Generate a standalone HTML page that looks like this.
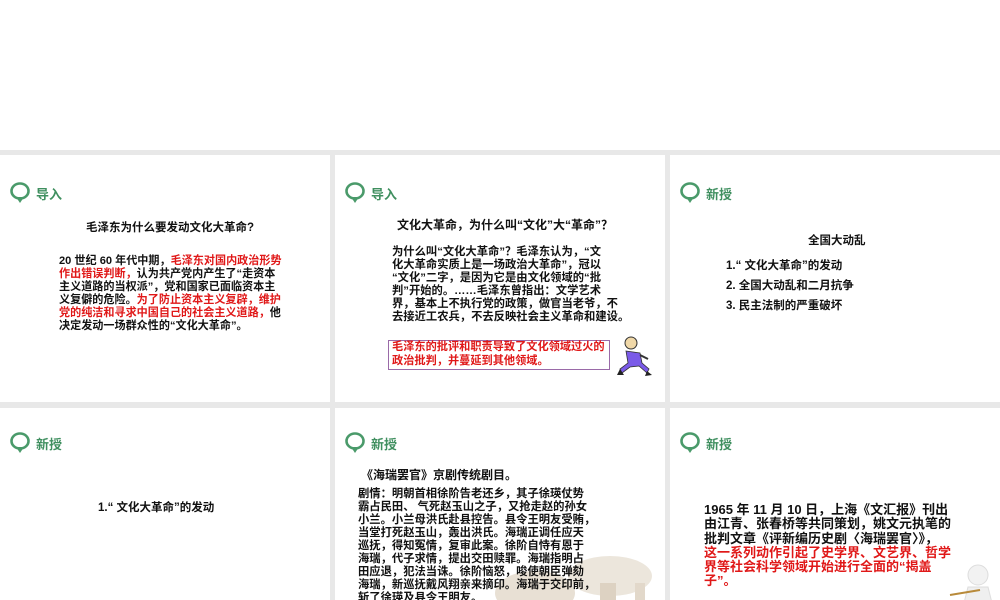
<!DOCTYPE html>
<html><head><meta charset="utf-8"><style>
*{margin:0;padding:0;box-sizing:border-box}
body{width:1000px;height:600px;overflow:hidden;background:#fff;font-family:"Liberation Sans","Noto Sans CJK SC",sans-serif;position:relative}
.bg{position:absolute;left:0;top:150px;width:1000px;height:450px;background:#e8e8e8}
.s{position:absolute;background:#fff;overflow:hidden}
.hd{position:absolute;left:9px;top:27px;display:flex;align-items:center;color:#3f8f5f;font-weight:bold;font-size:13px}
.pin{width:22px;height:22px;margin-right:5px;position:relative}
.t{position:absolute;font-weight:bold;font-size:12px;color:#111;line-height:14.5px;white-space:nowrap}
.r{color:#e01818}
</style></head><body>
<div class="bg"></div>

<svg width="0" height="0" style="position:absolute"><defs><g id="p"><ellipse cx="11" cy="9" rx="8.5" ry="7.5" fill="none" stroke="#4a9a6a" stroke-width="2.6"/><path d="M7 15 L11 21 L15 15Z" fill="#4a9a6a"/></g></defs></svg>

<div class="s" style="left:0;top:155px;width:330px;height:247px">
 <div class="hd"><svg class="pin" viewBox="0 0 22 22"><use href="#p"/></svg>导入</div>
 <div class="t" style="left:86px;top:66px;font-size:11.5px">毛泽东为什么要发动文化大革命?</div>
 <div class="t" style="left:59px;top:100px;font-size:11.1px;line-height:13px">20 世纪 60 年代中期，<span class="r">毛泽东对国内政治形势</span><br><span class="r">作出错误判断，</span>认为共产党内产生了“走资本<br>主义道路的当权派”，党和国家已面临资本主<br>义复僻的危险。<span class="r">为了防止资本主义复辟，维护</span><br><span class="r">党的纯洁和寻求中国自己的社会主义道路，</span>他<br>决定发动一场群众性的“文化大革命”。</div>
</div>

<div class="s" style="left:335px;top:155px;width:330px;height:247px">
 <div class="hd"><svg class="pin" viewBox="0 0 22 22"><use href="#p"/></svg>导入</div>
 <div class="t" style="left:62px;top:63px">文化大革命，为什么叫“文化”大“革命”？</div>
 <div class="t" style="left:57px;top:91px;font-size:11.3px;line-height:13px">为什么叫“文化大革命”？毛泽东认为，“文<br>化大革命实质上是一场政治大革命”，冠以<br>“文化”二字，是因为它是由文化领域的“批<br>判”开始的。……毛泽东曾指出：文学艺术<br>界，基本上不执行党的政策，做官当老爷，不<br>去接近工农兵，不去反映社会主义革命和建设。</div>
 <div class="t r" style="left:53px;top:185px;width:222px;height:30px;border:1px solid #9a6aa8;padding:0 3px;line-height:13.5px;font-size:11.2px">毛泽东的批评和职责导致了文化领域过火的<br>政治批判，并蔓延到其他领域。</div>
 <svg style="position:absolute;left:280px;top:180px" width="40" height="42" viewBox="0 0 40 42">
  <circle cx="16" cy="8" r="6" fill="#f0d8a8" stroke="#333"/>
  <path d="M11 16 L25 18 L27 28 L34 34 L32 38 L24 31 L15 32 L7 38 L5 34 L13 28 Z" fill="#7a5ae8" stroke="#333" stroke-width=".8"/>
  <path d="M25 20 L33 24" stroke="#333" stroke-width="2"/>
  <path d="M5 34 L2 40 L9 40" fill="#222"/><path d="M32 36 L37 40 L30 41" fill="#222"/>
 </svg>
</div>

<div class="s" style="left:670px;top:155px;width:330px;height:247px">
 <div class="hd"><svg class="pin" viewBox="0 0 22 22"><use href="#p"/></svg>新授</div>
 <div class="t" style="left:138px;top:79px;font-size:11.5px">全国大动乱</div>
 <div class="t" style="left:56px;top:101px;line-height:20px;font-size:11.5px">1.“ 文化大革命”的发动<br>2. 全国大动乱和二月抗争<br>3. 民主法制的严重破坏</div>
</div>

<div class="s" style="left:0;top:408px;width:330px;height:192px">
 <div class="hd" style="top:24px"><svg class="pin" viewBox="0 0 22 22"><use href="#p"/></svg>新授</div>
 <div class="t" style="left:98px;top:93px;font-size:11.5px">1.“ 文化大革命”的发动</div>
</div>

<div class="s" style="left:335px;top:408px;width:330px;height:192px">
 <div class="hd" style="top:24px"><svg class="pin" viewBox="0 0 22 22"><use href="#p"/></svg>新授</div>
 <svg style="position:absolute;left:160px;top:140px" width="170" height="55" viewBox="0 0 170 55">
  <ellipse cx="40" cy="45" rx="40" ry="22" fill="#e8e0d4"/><ellipse cx="115" cy="28" rx="42" ry="20" fill="#ece6dc"/><rect x="105" y="35" width="16" height="25" fill="#ddd2c2"/><rect x="140" y="35" width="10" height="25" fill="#e2d8ca"/>
 </svg>
 <div class="t" style="left:26px;top:60px">《海瑞罢官》京剧传统剧目。</div>
 <div class="t" style="left:23px;top:80px;font-size:11.3px;line-height:13px">剧情：明朝首相徐阶告老还乡，其子徐瑛仗势<br>霸占民田、 气死赵玉山之子，又抢走赵的孙女<br>小兰。小兰母洪氏赴县控告。县令王明友受贿，<br> 当堂打死赵玉山，轰出洪氏。海瑞正调任应天<br>巡抚，得知冤情，复审此案。徐阶自恃有恩于<br>海瑞，代子求情，提出交田赎罪。海瑞指明占<br>田应退，犯法当诛。徐阶恼怒，唆使朝臣弹劾<br>海瑞，新巡抚戴风翔亲来摘印。海瑞于交印前，<br>斩了徐瑛及县令王明友。</div>
</div>

<div class="s" style="left:670px;top:408px;width:330px;height:192px">
 <div class="hd" style="top:24px"><svg class="pin" viewBox="0 0 22 22"><use href="#p"/></svg>新授</div>
 <div class="t" style="left:34px;top:95px;font-size:13px;line-height:14.3px">1965 年 11 月 10 日，上海《文汇报》刊出<br>由江青、张春桥等共同策划，姚文元执笔的<br>批判文章《评新编历史剧〈海瑞罢官〉》，<br><span class="r">这一系列动作引起了史学界、文艺界、哲学<br>界等社会科学领域开始进行全面的“揭盖<br>子”。</span></div>
 <svg style="position:absolute;left:278px;top:155px" width="52" height="40" viewBox="0 0 52 40">
  <circle cx="30" cy="12" r="10" fill="#f2f2f2" stroke="#ddd"/><path d="M16 40 L20 24 L40 24 L44 40Z" fill="#efefef" stroke="#ddd"/><path d="M2 32 L32 27" stroke="#b88a3a" stroke-width="2"/>
 </svg>
</div>
</body></html>
